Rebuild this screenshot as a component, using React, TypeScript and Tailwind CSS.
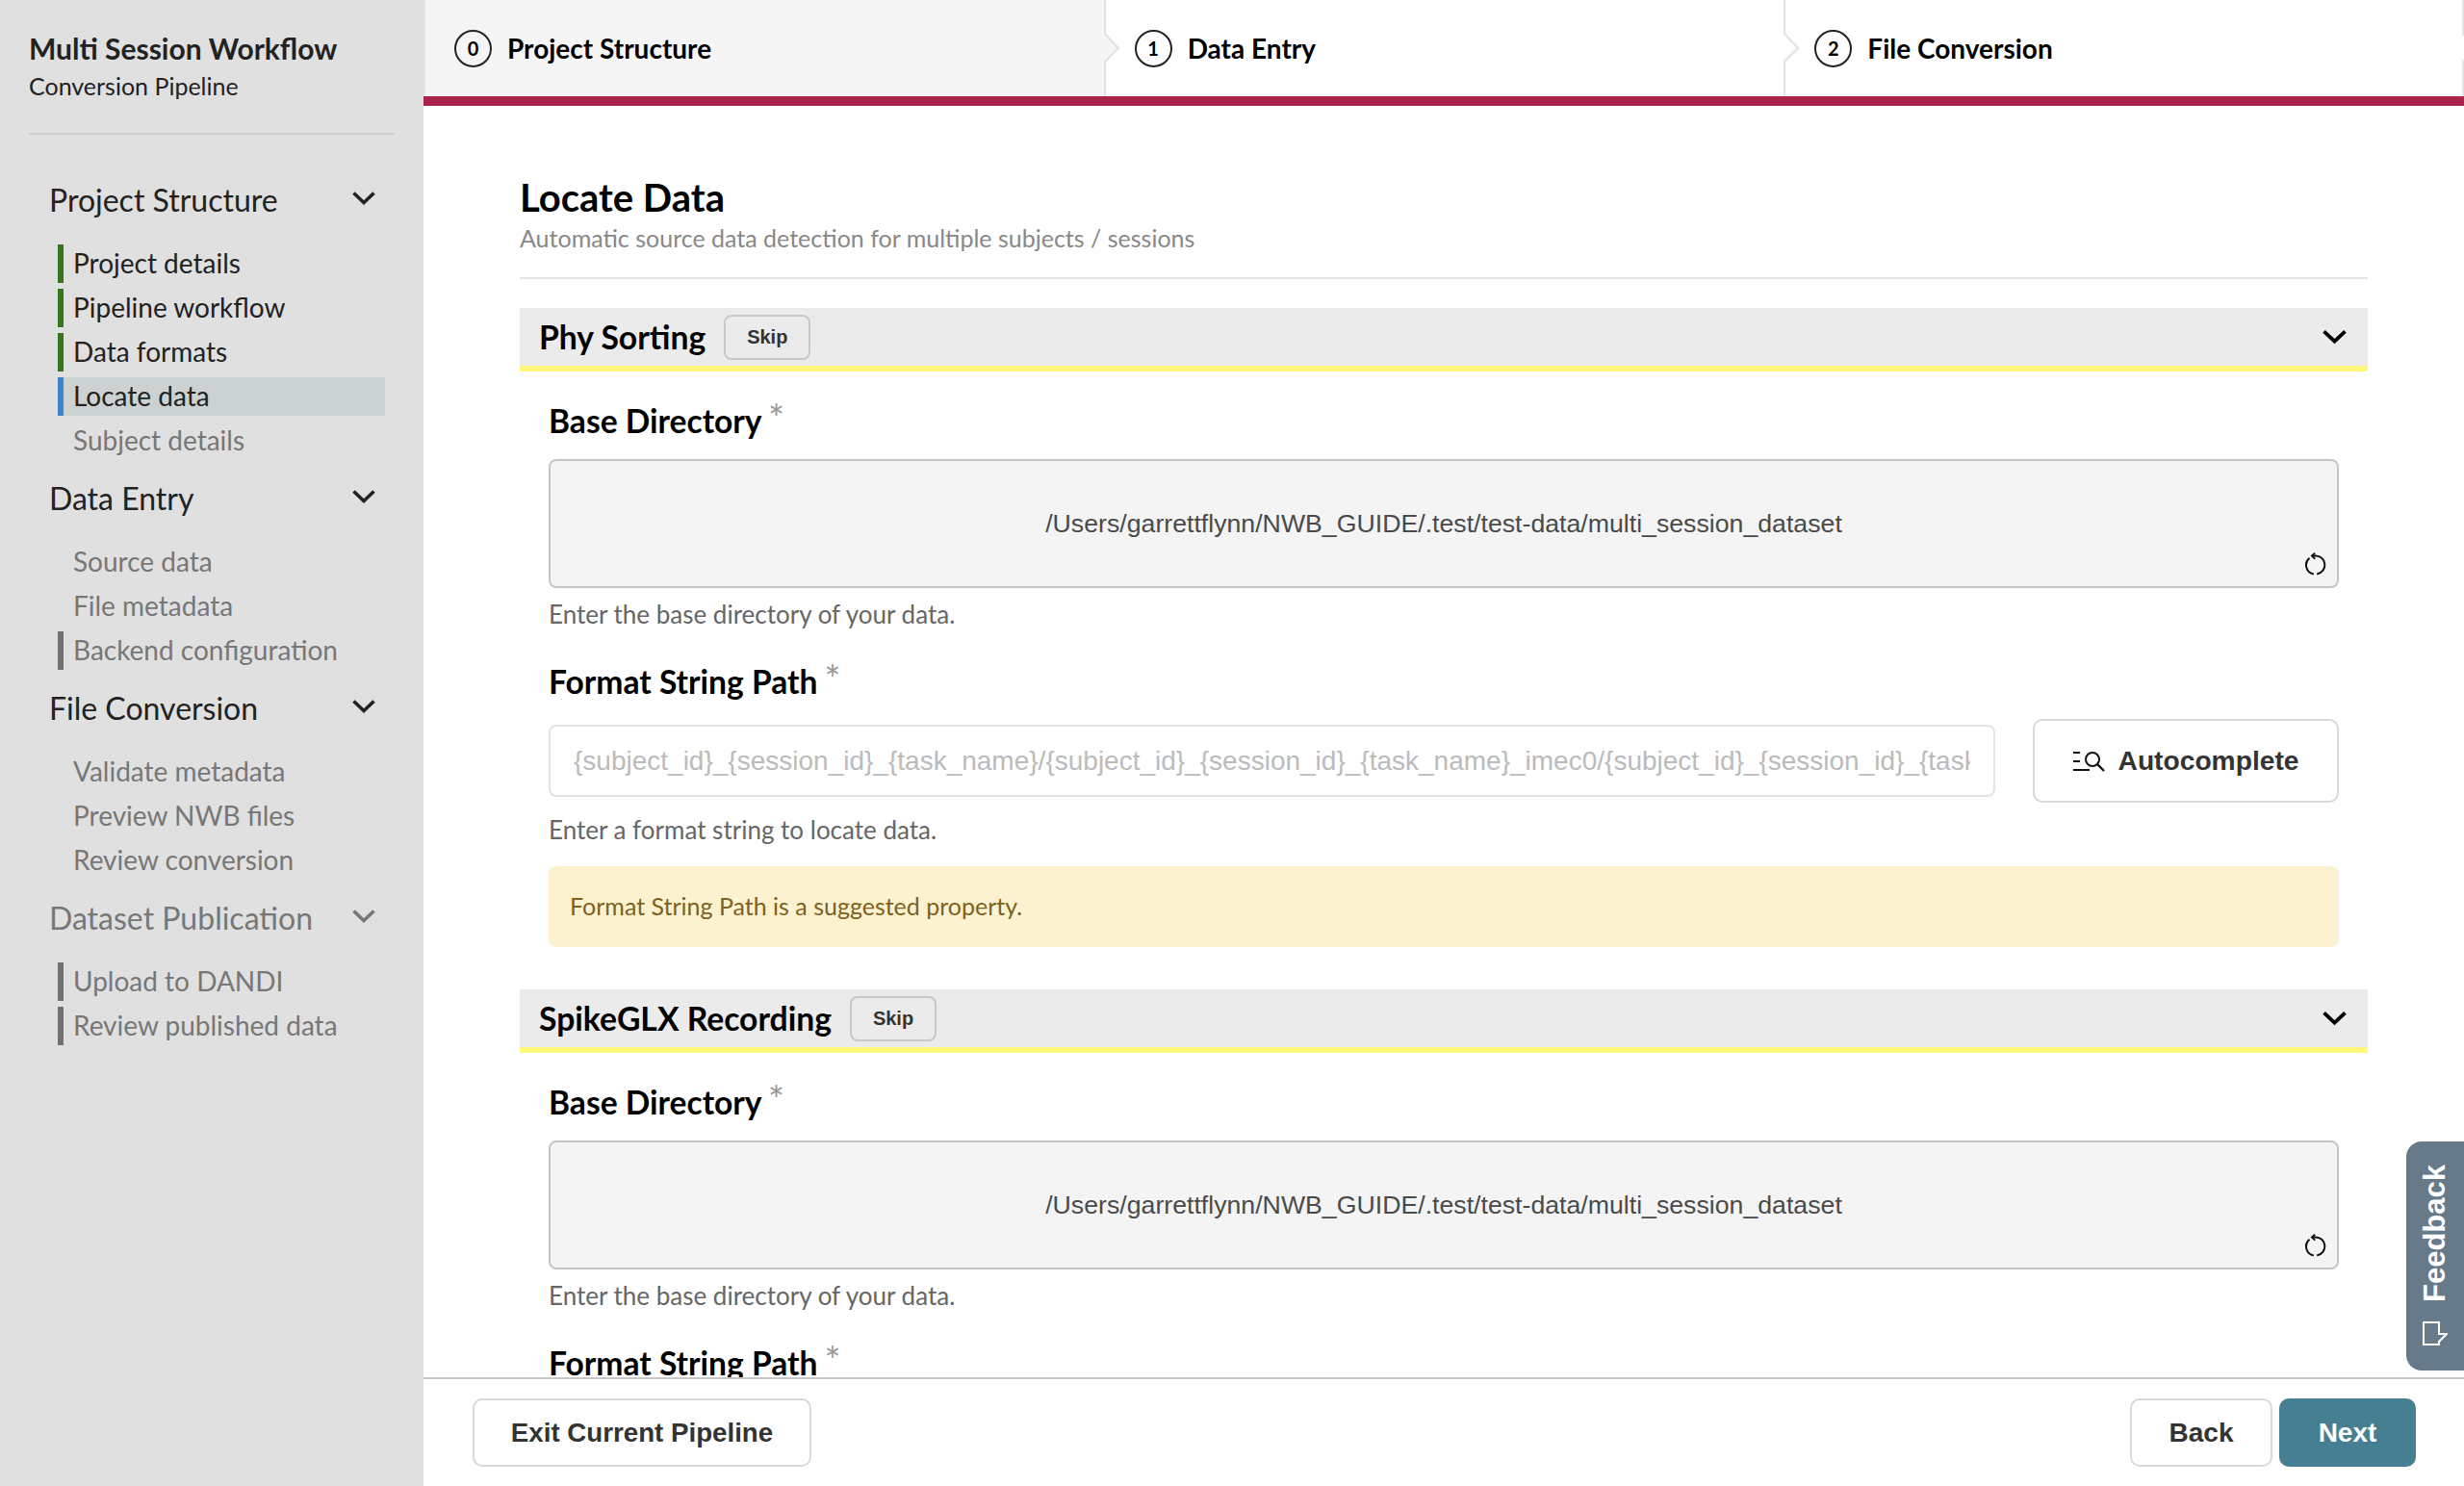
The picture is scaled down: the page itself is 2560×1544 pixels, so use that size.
import type { ReactNode } from "react";

type NavItem = { label: string; bar: string; muted?: boolean; active?: boolean };

const NAV: { title: string; muted?: boolean; items: NavItem[] }[] = [
  {
    title: "Project Structure",
    items: [
      { label: "Project details", bar: "bg-[#38761d]" },
      { label: "Pipeline workflow", bar: "bg-[#38761d]" },
      { label: "Data formats", bar: "bg-[#38761d]" },
      { label: "Locate data", bar: "bg-[#3d85c6]", active: true },
      { label: "Subject details", bar: "bg-[#dce1e1]", muted: true },
    ],
  },
  {
    title: "Data Entry",
    items: [
      { label: "Source data", bar: "bg-[#dce1e1]", muted: true },
      { label: "File metadata", bar: "bg-[#dce1e1]", muted: true },
      { label: "Backend configuration", bar: "bg-[#717171]", muted: true },
    ],
  },
  {
    title: "File Conversion",
    items: [
      { label: "Validate metadata", bar: "bg-[#dce1e1]", muted: true },
      { label: "Preview NWB files", bar: "bg-[#dce1e1]", muted: true },
      { label: "Review conversion", bar: "bg-[#dce1e1]", muted: true },
    ],
  },
  {
    title: "Dataset Publication",
    muted: true,
    items: [
      { label: "Upload to DANDI", bar: "bg-[#717171]", muted: true },
      { label: "Review published data", bar: "bg-[#717171]", muted: true },
    ],
  },
];

const PATH = "/Users/garrettflynn/NWB_GUIDE/.test/test-data/multi_session_dataset";
const FORMAT =
  "{subject_id}_{session_id}_{task_name}/{subject_id}_{session_id}_{task_name}_imec0/{subject_id}_{session_id}_{task_name}_t0.imec0.ap.bin";

function Chevron({ className }: { className: string }) {
  return (
    <svg viewBox="0 0 24 14" fill="none" stroke="currentColor" strokeWidth="3.6" className={className}>
      <path d="M1.5 1.5 12 11.5 22.5 1.5" />
    </svg>
  );
}

function Sidebar() {
  return (
    <aside className="w-[440px] shrink-0 bg-[#e0e0e0] px-[30px] text-[#222]">
      <div className="pt-[30px] text-[30px] leading-[40px] font-bold">Multi Session Workflow</div>
      <div className="text-[25px] leading-[39px]">Conversion Pipeline</div>
      <div className="h-[2px] bg-[#cccccc] mt-[29px] mb-[49px]" />
      {NAV.map((s) => (
        <div key={s.title} className="mb-[21px]">
          <div className={`flex items-center justify-between h-[40px] pb-[3px] pl-[21px] pr-[20px] text-[32px] ${s.muted ? "text-[#777]" : ""}`}>
            <span>{s.title}</span>
            <Chevron className="w-[24px] h-[14px] -mt-[4px]" />
          </div>
          <div className="mt-[25px] pl-[30px] pr-[10px] flex flex-col gap-[6px]">
            {s.items.map((it) => (
              <div key={it.label} className={`flex h-[40px] ${it.active ? "bg-[#ccd2d2]" : ""}`}>
                <div className={`w-[6px] shrink-0 ${it.bar}`} />
                <div className={`pl-[10px] text-[28px] leading-[38px] ${it.muted ? "text-[#777]" : ""}`}>{it.label}</div>
              </div>
            ))}
          </div>
        </div>
      ))}
    </aside>
  );
}

function TabArrow({ fill }: { fill: string }) {
  return (
    <svg viewBox="0 0 17 100" className="absolute left-0 top-0 w-[17px] h-[100px]" fill="none">
      <path d="M0 35 15 50 0 64Z" fill={fill} />
      <path d="M1 0V35L15 50 1 64V100" stroke="#e4e4e4" strokeWidth="2.4" />
    </svg>
  );
}

function Tabs() {
  const tabs = ["Project Structure", "Data Entry", "File Conversion"];
  return (
    <div className="flex h-[110px] shrink-0 border-b-[10px] border-[#a9254b]">
      {tabs.map((t, i) => (
        <div
          key={t}
          className={`relative w-1/3 flex items-center gap-[16px] pl-[32px] text-[28px] font-bold text-black ${i === 0 ? "bg-[#f5f5f5]" : "bg-white"}`}
        >
          {i === 0 && <div className="absolute left-0 inset-y-0 w-[2px] bg-[#e4e4e4]" />}
          {i > 0 && <TabArrow fill={i === 1 ? "#f5f5f5" : "#ffffff"} />}
          {i === 2 && (
            <div className="absolute right-0 inset-y-0 w-[2px] flex flex-col justify-between">
              <div className="h-[37px] bg-[#e4e4e4]" />
              <div className="h-[38px] bg-[#e4e4e4]" />
            </div>
          )}
          <div className="w-[39px] h-[39px] rounded-full border-[2px] border-[#222] flex items-center justify-center text-[20px]">{i}</div>
          <span>{t}</span>
        </div>
      ))}
    </div>
  );
}

function RefreshIcon() {
  return (
    <svg viewBox="0 0 24 26" className="absolute right-[10px] bottom-[9px] w-[24px] h-[26px]" fill="none" stroke="#111" strokeWidth="2">
      <path d="M8 3.5H11.5A9.5 9.5 0 0 1 13.2 22.4" />
      <path d="M9.8 22.4A9.5 9.5 0 0 1 5.5 5.7" />
      <path d="M11.2 0.8 8 3.5 11.2 6.6" />
    </svg>
  );
}

function Label({ children }: { children: ReactNode }) {
  return (
    <div className="h-[44px] text-[33.6px] leading-[44px] font-bold text-black">
      {children} <span className="-ml-[1px] text-[#999] text-[40px] leading-none font-normal align-[0px]">*</span>
    </div>
  );
}

function Help({ children, className = "" }: { children: ReactNode; className?: string }) {
  return <div className={`text-[26px] leading-[36px] text-[#666] ${className}`}>{children}</div>;
}

function Section({ title, last }: { title: string; last?: boolean }) {
  return (
    <section>
      <div className="flex items-center h-[66px] bg-[#ebebeb] border-b-[6px] border-[#fff77c] pl-[20px] pr-[22px]">
        <span className="text-[33.7px] leading-[42px] pb-[1px] font-bold text-black">{title}</span>
        <div className="ml-[19px] w-[90px] h-[47px] rounded-[8px] border-[2px] border-[#c8c8c8] flex items-center justify-center font-['Liberation_Sans',sans-serif] text-[20px] font-bold text-[#333]">
          Skip
        </div>
        <Chevron className="ml-auto w-[25px] h-[16px] text-black" />
      </div>
      <div className="px-[30px] pt-[29px]">
        <Label>Base Directory</Label>
        <div className="relative mt-[18px] h-[134px] bg-[#f4f4f4] border-[2px] border-[#c4c4c4] rounded-[8px] flex items-center justify-center font-['Liberation_Sans',sans-serif] text-[26.7px] text-[#4a4a4a]">
          {PATH}
          <RefreshIcon />
        </div>
        <Help className="mt-[9px]">Enter the base directory of your data.</Help>
        <div className="mt-[30px]">
          <Label>Format String Path</Label>
        </div>
        {!last && (
          <>
            <div className="mt-[17px] flex items-center justify-between">
              <input
                readOnly
                placeholder={FORMAT}
                className="w-[1503px] h-[75px] rounded-[8px] border-[2px] border-[#e2e2e2] px-[24px] font-['Liberation_Sans',sans-serif] text-[28px] placeholder:text-[#bbb] outline-none"
              />
              <div className="w-[318px] h-[87px] rounded-[10px] border-[2px] border-[#d8d8d8] flex items-center justify-center gap-[14px] font-['Liberation_Sans',sans-serif] text-[28.2px] font-bold text-[#333]">
                <svg viewBox="0 0 33 22" className="w-[33px] h-[22px]" fill="none" stroke="#111" strokeWidth="2">
                  <path d="M0 2H7M0 11H7M0 20H17" />
                  <circle cx="20" cy="9" r="7" />
                  <path d="M25 14 32 21" strokeWidth="2.4" />
                </svg>
                Autocomplete
              </div>
            </div>
            <Help className="mt-[10px]">Enter a format string to locate data.</Help>
            <div className="mt-[20px] h-[84px] rounded-[8px] bg-[#fdf2d0] flex items-center pl-[22px] text-[25px] text-[#7d6121]">
              Format String Path is a suggested property.
            </div>
          </>
        )}
      </div>
    </section>
  );
}

function Footer() {
  const btn = "h-[71px] rounded-[10px] flex items-center justify-center font-['Liberation_Sans',sans-serif] font-bold";
  return (
    <div className="h-[113px] shrink-0 border-t-[2px] border-[#c8c8c8] flex items-center pl-[51px] pr-[50px] bg-white">
      <div className={`${btn} w-[352px] text-[27.7px] border-[2px] border-[#d8d8d8] text-[#333]`}>Exit Current Pipeline</div>
      <div className={`${btn} ml-auto w-[148px] text-[28px] border-[2px] border-[#d8d8d8] text-[#333]`}>Back</div>
      <div className={`${btn} ml-[7px] w-[142px] text-[28px] bg-[#467f92] text-white`}>Next</div>
    </div>
  );
}

export default function App() {
  return (
    <div className="relative flex w-[2560px] h-[1544px] overflow-hidden bg-white font-['Lato',sans-serif]">
      <Sidebar />
      <main className="flex-1 min-w-0 flex flex-col">
        <Tabs />
        <div className="flex-1 min-h-0 overflow-hidden px-[100px] pt-[70px]">
          <h1 className="text-[40px] leading-[50px] font-bold text-black">Locate Data</h1>
          <div className="text-[25px] leading-[34px] text-[#888]">Automatic source data detection for multiple subjects / sessions</div>
          <div className="h-[2px] bg-[#e5e5e5] mt-[24px] mb-[30px]" />
          <Section title="Phy Sorting" />
          <div className="h-[44px]" />
          <Section title="SpikeGLX Recording" last />
        </div>
        <Footer />
      </main>
      <div className="absolute right-0 top-[1186px] w-[60px] h-[238px] rounded-l-[16px] bg-[#667a8a] flex flex-col items-center text-white font-['Liberation_Sans',sans-serif]">
        <span className="mt-[24px] -ml-[2px] text-[31px] font-bold leading-none [writing-mode:vertical-rl] rotate-180">Feedback</span>
        <svg viewBox="0 0 26 25" className="mt-[20px] w-[26px] h-[25px] -ml-[1px]" fill="none" stroke="currentColor" strokeWidth="2">
          <path d="M1 1H17V13H25L17 21V24H1Z" />
        </svg>
      </div>
    </div>
  );
}
